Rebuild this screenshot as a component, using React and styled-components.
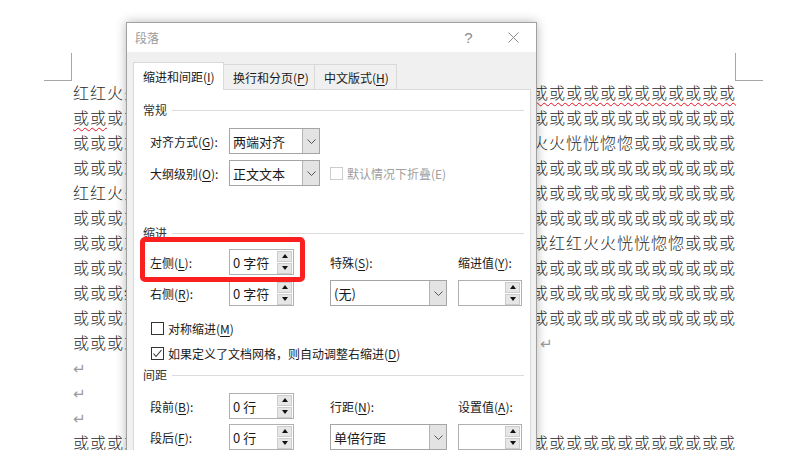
import React from "react";
import styled, { createGlobalStyle } from "styled-components";

const GlobalStyle = createGlobalStyle`
  body {
    margin: 0;
    font-family: "Noto Sans CJK SC", "Noto Sans", sans-serif;
  }
`;

const Screen = styled.div`
  position: relative;
  width: 800px;
  height: 450px;
  overflow: hidden;
  background: #fff;
`;

/* ---------- document behind the dialog ---------- */

const Doc = styled.div`
  padding: 53px 0 0 44px;
`;

const Marks = styled.div`
  display: flex;
  justify-content: space-between;
  width: 719px;
  height: 27px;
`;

const Mark = styled.div`
  width: 28px;
  height: 28px;
  box-sizing: border-box;
  border-bottom: 1px solid #a6a6a6;
  ${(p) => (p.$right ? "border-left: 1px solid #a6a6a6;" : "border-right: 1px solid #a6a6a6;")}
`;

const Lines = styled.div`
  margin-left: 29px;
`;

const Line = styled.div`
  font-size: 16px;
  font-weight: 300;
  letter-spacing: 1px;
  line-height: 25px;
  height: 25px;
  white-space: nowrap;
  color: #2b2b2b;
`;

const Squiggle = styled.span`
  text-decoration: underline wavy #e81123;
  text-decoration-thickness: 1px;
  text-underline-offset: 3px;
  text-decoration-skip-ink: none;
`;

const Pilcrow = styled.span`
  font-family: "DejaVu Sans", sans-serif;
  font-size: 15px;
  font-weight: 400;
  letter-spacing: 0;
  color: #9a9a9a;
  margin-left: ${(p) => p.$gap || 0}px;
`;

const o = (n) => "或".repeat(n);
const hh = "红红火火恍恍惚惚";

const docLines = [
  [hh + o(19), { sq: o(12) }],
  [{ sq: o(2) }, o(37)],
  [o(25) + hh + o(6)],
  [o(39)],
  [hh + o(31)],
  [o(39)],
  [o(28) + hh + o(3)],
  [o(39)],
  [o(3) + hh + o(28)],
  [o(39)],
  [o(27), { mark: 8 }],
  [{ mark: 0 }],
  [{ mark: 0 }],
  [{ mark: 0 }],
  [o(39)],
];

/* ---------- dialog ---------- */

const Dialog = styled.div`
  position: absolute;
  left: 126px;
  top: 22px;
  width: 411px;
  height: 440px;
  box-sizing: border-box;
  display: flex;
  flex-direction: column;
  background: #f0f0f0;
  border: 1px solid #a0a0a0;
  box-shadow: 0 0 10px rgba(0, 0, 0, 0.28);
  font-size: 12px;
  color: #1a1a1a;
`;

const TitleBar = styled.div`
  height: 29px;
  display: flex;
  align-items: center;
  background: #fff;
  padding-left: 8px;
`;

const Title = styled.div`
  flex: 1;
  color: #9a9a9a;
`;

const TitleBtn = styled.div`
  width: 45px;
  height: 29px;
  display: flex;
  align-items: center;
  justify-content: center;
  color: #8c8c8c;
  font-family: "Liberation Sans", sans-serif;
  font-size: 15px;
`;

const Body = styled.div`
  flex: 1;
  display: flex;
  flex-direction: column;
  padding: 10px 5px 0 6px;
`;

const Tabs = styled.div`
  display: flex;
  align-items: flex-end;
  height: 27px;
`;

const Tab = styled.div`
  position: relative;
  z-index: ${(p) => (p.$active ? 1 : 0)};
  width: ${(p) => p.$w}px;
  height: ${(p) => (p.$active ? 28 : 25)}px;
  margin-bottom: ${(p) => (p.$active ? -1 : 0)}px;
  margin-left: ${(p) => (p.$first ? 0 : -1)}px;
  box-sizing: border-box;
  display: flex;
  align-items: center;
  padding: ${(p) => (p.$active ? "0 0 1px 9px" : "1px 0 0 9px")};
  background: ${(p) => (p.$active ? "#fff" : "#f0f0f0")};
  border: 1px solid #d9d9d9;
  border-bottom: none;
`;

const Panel = styled.div`
  flex: 1;
  background: #fff;
  border: 1px solid #d9d9d9;
  padding: 12px 0 0 9px;
`;

const Header = styled.div`
  display: flex;
  align-items: center;
  gap: 5px;
  height: 16px;
  line-height: 16px;
  margin-top: ${(p) => p.$mt || 0}px;
  margin-right: 6px;
  color: #333;
  &::after {
    content: "";
    flex: 1;
    height: 1px;
    background: #dcdcdc;
  }
`;

const Grid = styled.div`
  position: relative;
  display: grid;
  grid-template-columns: 79px 101px 128px 64px;
  grid-auto-rows: 26px;
  row-gap: ${(p) => p.$gap}px;
  align-items: center;
  margin: ${(p) => p.$mt}px 0 0 7px;
`;

const Highlight = styled.div`
  position: absolute;
  left: -10px;
  top: -12px;
  width: 165px;
  height: 45px;
  box-sizing: border-box;
  border: 5px solid #fb1f1f;
  border-radius: 5px;
`;

const U = styled.span`
  text-decoration: underline;
  text-underline-offset: 2px;
`;

const Select = styled.div`
  width: ${(p) => p.$w}px;
  height: 26px;
  box-sizing: border-box;
  display: flex;
  border: 1px solid #a5a5a5;
  background: #fff;
`;

const SelectText = styled.div`
  flex: 1;
  display: flex;
  align-items: center;
  padding-left: 3px;
  font-size: 13px;
`;

const SelectBtn = styled.div`
  width: 16px;
  display: flex;
  align-items: center;
  justify-content: center;
  background: #e3e3e3;
  border-left: 1px solid #b4b4b4;
`;

const Spin = styled.div`
  width: ${(p) => p.$w}px;
  height: 26px;
  box-sizing: border-box;
  display: flex;
  align-items: center;
  border: 1px solid #b0b0b0;
  background: #fff;
`;

const SpinText = styled.div`
  flex: 1;
  padding-left: 3px;
  font-size: 13px;
`;

const SpinBtns = styled.div`
  display: flex;
  flex-direction: column;
  gap: 1px;
  margin-right: 1px;
`;

const SpinBtn = styled.div`
  width: 15px;
  height: 11px;
  box-sizing: border-box;
  display: flex;
  align-items: center;
  justify-content: center;
  background: #e6e6e6;
  border: 1px solid #cccccc;
  &::before {
    content: "";
    border-left: 3.5px solid transparent;
    border-right: 3.5px solid transparent;
    ${(p) => (p.$down ? "border-top: 4px solid #111;" : "border-bottom: 4px solid #111;")}
  }
`;

const CheckRow = styled.div`
  display: flex;
  align-items: center;
  gap: 4px;
  height: 20px;
  margin: ${(p) => p.$mt}px 0 0 ${(p) => p.$ml || 0}px;
  color: ${(p) => (p.$disabled ? "#a0a0a0" : "inherit")};
  grid-column: ${(p) => p.$span || "auto"};
`;

const Box = styled.div`
  width: 13px;
  height: 13px;
  box-sizing: border-box;
  display: flex;
  align-items: center;
  justify-content: center;
  background: #fff;
  border: 1px solid ${(p) => (p.$disabled ? "#cccccc" : "#333")};
`;

const Chevron = () => (
  <svg width="9" height="5" viewBox="0 0 9 5">
    <polyline points="0.5,0.5 4.5,4.5 8.5,0.5" fill="none" stroke="#555" strokeWidth="1" />
  </svg>
);

const CloseIcon = () => (
  <svg width="11" height="11" viewBox="0 0 11 11">
    <path d="M0.5 0.5 L10.5 10.5 M10.5 0.5 L0.5 10.5" stroke="#8a8a8a" strokeWidth="1" />
  </svg>
);

const Tick = () => (
  <svg width="11" height="11" viewBox="0 0 11 11">
    <polyline points="1.5,5.5 4,8.5 9.5,2" fill="none" stroke="#333" strokeWidth="1.1" />
  </svg>
);

const Lbl = ({ t, k, colon = true }) => (
  <span>
    {t}(<U>{k}</U>){colon ? ":" : ""}
  </span>
);

const DropDown = ({ w, children }) => (
  <Select $w={w}>
    <SelectText>{children}</SelectText>
    <SelectBtn>
      <Chevron />
    </SelectBtn>
  </Select>
);

const Spinner = ({ w = 65, children }) => (
  <Spin $w={w}>
    <SpinText>{children}</SpinText>
    <SpinBtns>
      <SpinBtn />
      <SpinBtn $down />
    </SpinBtns>
  </Spin>
);

export default function App() {
  return (
    <Screen>
      <GlobalStyle />
      <Doc>
        <Marks>
          <Mark />
          <Mark $right />
        </Marks>
        <Lines>
          {docLines.map((segs, i) => (
            <Line key={i}>
              {segs.map((s, j) =>
                typeof s === "string" ? (
                  <span key={j}>{s}</span>
                ) : s.sq ? (
                  <Squiggle key={j}>{s.sq}</Squiggle>
                ) : (
                  <Pilcrow key={j} $gap={s.mark}>↵</Pilcrow>
                )
              )}
            </Line>
          ))}
        </Lines>
      </Doc>

      <Dialog>
        <TitleBar>
          <Title>段落</Title>
          <TitleBtn>?</TitleBtn>
          <TitleBtn>
            <CloseIcon />
          </TitleBtn>
        </TitleBar>
        <Body>
          <Tabs>
            <Tab $active $first $w={91}>
              <Lbl t="缩进和间距" k="I" colon={false} />
            </Tab>
            <Tab $w={92}>
              <Lbl t="换行和分页" k="P" colon={false} />
            </Tab>
            <Tab $w={83}>
              <Lbl t="中文版式" k="H" colon={false} />
            </Tab>
          </Tabs>
          <Panel>
            <Header>常规</Header>
            <Grid $mt={10} $gap={6}>
              <Lbl t="对齐方式" k="G" />
              <DropDown w={91}>两端对齐</DropDown>
              <span />
              <span />
              <Lbl t="大纲级别" k="O" />
              <DropDown w={91}>正文文本</DropDown>
              <CheckRow $disabled $span="3 / 5" $mt={0}>
                <Box $disabled />
                <span>默认情况下折叠(E)</span>
              </CheckRow>
            </Grid>

            <Header $mt={39}>缩进</Header>
            <Grid $mt={8} $gap={5}>
              <Highlight />
              <Lbl t="左侧" k="L" />
              <Spinner>0 字符</Spinner>
              <Lbl t="特殊" k="S" />
              <Lbl t="缩进值" k="Y" />
              <Lbl t="右侧" k="R" />
              <Spinner>0 字符</Spinner>
              <DropDown w={117}>(无)</DropDown>
              <Spinner w={64} />
            </Grid>
            <CheckRow $mt={12} $ml={8}>
              <Box />
              <Lbl t="对称缩进" k="M" colon={false} />
            </CheckRow>
            <CheckRow $mt={5} $ml={8}>
              <Box>
                <Tick />
              </Box>
              <Lbl t="如果定义了文档网格，则自动调整右缩进" k="D" colon={false} />
            </CheckRow>

            <Header $mt={4}>间距</Header>
            <Grid $mt={10} $gap={5}>
              <Lbl t="段前" k="B" />
              <Spinner>0 行</Spinner>
              <Lbl t="行距" k="N" />
              <Lbl t="设置值" k="A" />
              <Lbl t="段后" k="F" />
              <Spinner>0 行</Spinner>
              <DropDown w={117}>单倍行距</DropDown>
              <Spinner w={64} />
            </Grid>
          </Panel>
        </Body>
      </Dialog>
    </Screen>
  );
}
